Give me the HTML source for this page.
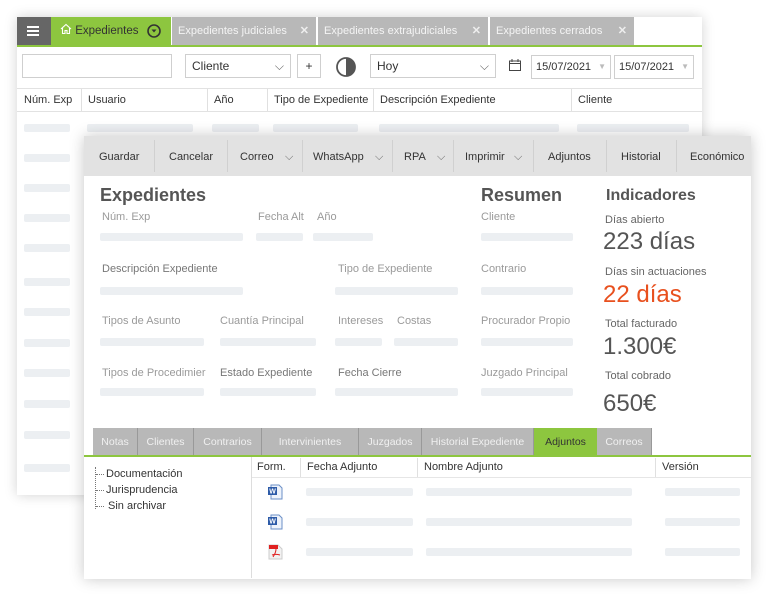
<!DOCTYPE html>
<html><head><meta charset="utf-8"><style>
*{box-sizing:border-box;margin:0;padding:0}
body{width:769px;height:598px;background:#fff;position:relative;overflow:hidden;font-family:"Liberation Sans",sans-serif;font-size:12px;color:#333}
.a{position:absolute}
.sk{position:absolute;height:8px;background:#eceff2;border-radius:2px}
.tab{position:absolute;top:17px;height:28px;background:#b8b8b8;color:#f4f4f4;line-height:28px;padding-left:6px;font-size:11px;white-space:nowrap}
.tab .x{position:absolute;right:7px;top:0;color:#eee;font-weight:bold;font-size:11px}
.inp{position:absolute;border:1px solid #cfcfcf;background:#fff;height:24px;line-height:22px;padding-left:6px;font-size:12px}
.hd{position:absolute;top:89px;height:22px;line-height:22px;font-size:11px;color:#333;border-right:1px solid #e0e0e0;padding-left:6px;white-space:nowrap;overflow:hidden}
.tb{position:absolute;top:136px;height:40px;line-height:42px;font-size:11px;color:#333}
.sep{position:absolute;top:140px;width:1px;height:32px;background:#d0d0d0}
.lbl{position:absolute;font-size:11px;color:#9a9a9a;white-space:nowrap}
.btab{position:absolute;top:428px;height:27px;background:#b8b8b8;color:#f0f0f0;line-height:28px;text-align:center;font-size:10.5px;border-right:1px solid #999;white-space:nowrap;overflow:hidden}
.gh{position:absolute;font-size:11px;color:#333}
</style></head><body>
<!-- back window -->
<div class="a" style="left:17px;top:17px;width:685px;height:478px;background:#fff;box-shadow:0 0 12px rgba(0,0,0,.18)"></div>
<div class="a" style="left:17px;top:17px;width:34px;height:28px;background:#666"></div>
<div class="a" style="left:27px;top:26px;width:12px;height:1.5px;background:#fff;box-shadow:0 4px 0 #fff,0 8px 0 #fff"></div>
<div class="a" style="left:51px;top:17px;width:120px;height:28px;background:#8dc63f;line-height:28px;padding-left:9px;color:#333;font-size:11.5px">
<svg width="12" height="12" viewBox="0 0 12 12" style="vertical-align:-1px"><path d="M1 6L6 1.5 11 6M2.5 5v5.5h2.5v-3h2v3h2.5V5" fill="none" stroke="#fff" stroke-width="1.1"/></svg> Expedientes</div>
<svg class="a" style="left:147px;top:24px" width="14" height="14" viewBox="0 0 14 14"><circle cx="7" cy="7" r="6" fill="none" stroke="#333" stroke-width="1.6"/><path d="M4.5 5.5h5L7 8.5z" fill="#333"/></svg>
<div class="tab" style="left:172px;width:144px">Expedientes judiciales<span class="x">✕</span></div>
<div class="tab" style="left:318px;width:170px">Expedientes extrajudiciales<span class="x">✕</span></div>
<div class="tab" style="left:490px;width:144px">Expedientes cerrados<span class="x">✕</span></div>
<div class="a" style="left:17px;top:45px;width:685px;height:2px;background:#8dc63f"></div>
<div class="inp" style="left:22px;top:54px;width:150px"></div>
<div class="inp" style="left:185px;top:54px;width:106px">Cliente<span style="position:absolute;right:6px;color:#666">⌵</span></div>
<div class="inp" style="left:297px;top:54px;width:24px;padding:0;text-align:center">+</div>
<svg class="a" style="left:335px;top:56px" width="22" height="22" viewBox="0 0 22 22"><circle cx="11" cy="11" r="9" fill="none" stroke="#555" stroke-width="1.8"/><path d="M11 2a9 9 0 0 1 0 18z" fill="#555"/></svg>
<div class="inp" style="left:370px;top:54px;width:126px">Hoy<span style="position:absolute;right:6px;color:#666">⌵</span></div>
<svg class="a" style="left:508px;top:58px" width="14" height="14" viewBox="0 0 14 14"><rect x="1.5" y="3" width="11" height="9.5" fill="none" stroke="#444"/><path d="M1.5 5.5h11M4 1v3M10 1v3" stroke="#444"/></svg>
<div class="inp" style="left:531px;top:55px;width:80px;font-size:11px;padding-left:4px">15/07/2021<span style="position:absolute;right:4px;color:#bbb;font-size:8px">▼</span></div>
<div class="inp" style="left:614px;top:55px;width:80px;font-size:11px;padding-left:4px">15/07/2021<span style="position:absolute;right:4px;color:#bbb;font-size:8px">▼</span></div>
<div class="a" style="left:17px;top:88px;width:685px;height:1px;background:#e2e2e2"></div>
<div class="a" style="left:17px;top:111px;width:685px;height:1px;background:#e2e2e2"></div>
<div class="hd" style="left:18px;width:64px">Núm. Exp</div>
<div class="hd" style="left:82px;width:126px">Usuario</div>
<div class="hd" style="left:208px;width:60px">Año</div>
<div class="hd" style="left:268px;width:106px">Tipo de Expediente</div>
<div class="hd" style="left:374px;width:198px">Descripción Expediente</div>
<div class="hd" style="left:572px;width:128px;border:none">Cliente</div>
<div class="sk" style="left:24px;top:124px;width:46px"></div><div class="sk" style="left:87px;top:124px;width:106px"></div><div class="sk" style="left:212px;top:124px;width:47px"></div><div class="sk" style="left:273px;top:124px;width:85px"></div><div class="sk" style="left:379px;top:124px;width:180px"></div><div class="sk" style="left:577px;top:124px;width:112px"></div>
<div class="sk" style="left:24px;top:154px;width:46px"></div><div class="sk" style="left:24px;top:184px;width:46px"></div><div class="sk" style="left:24px;top:214px;width:46px"></div><div class="sk" style="left:24px;top:244px;width:46px"></div><div class="sk" style="left:24px;top:278px;width:46px"></div><div class="sk" style="left:24px;top:308px;width:46px"></div><div class="sk" style="left:24px;top:339px;width:46px"></div><div class="sk" style="left:24px;top:369px;width:46px"></div><div class="sk" style="left:24px;top:400px;width:46px"></div><div class="sk" style="left:24px;top:431px;width:46px"></div><div class="sk" style="left:24px;top:464px;width:46px"></div>
<!-- front window -->
<div class="a" style="left:84px;top:136px;width:667px;height:443px;background:#fff;box-shadow:0 0 14px rgba(0,0,0,.22)"></div>
<div class="a" style="left:84px;top:136px;width:667px;height:40px;background:#e2e2e2"></div>
<div class="tb" style="left:99px">Guardar</div><div class="sep" style="left:154px"></div>
<div class="tb" style="left:169px">Cancelar</div><div class="sep" style="left:227px"></div>
<div class="tb" style="left:240px">Correo</div><div class="tb" style="left:285px;color:#666">⌵</div><div class="sep" style="left:302px"></div>
<div class="tb" style="left:313px">WhatsApp</div><div class="tb" style="left:375px;color:#666">⌵</div><div class="sep" style="left:392px"></div>
<div class="tb" style="left:404px">RPA</div><div class="tb" style="left:437px;color:#666">⌵</div><div class="sep" style="left:453px"></div>
<div class="tb" style="left:465px">Imprimir</div><div class="tb" style="left:514px;color:#666">⌵</div><div class="sep" style="left:533px"></div>
<div class="tb" style="left:548px">Adjuntos</div><div class="sep" style="left:606px"></div>
<div class="tb" style="left:621px">Historial</div><div class="sep" style="left:676px"></div>
<div class="tb" style="left:690px">Económico</div>
<div class="a" style="left:100px;top:185px;font-size:18px;font-weight:bold;color:#555">Expedientes</div>
<div class="a" style="left:481px;top:185px;font-size:18px;font-weight:bold;color:#555">Resumen</div>
<div class="a" style="left:606px;top:187px;font-size:16px;font-weight:bold;color:#555">Indicadores</div>
<div class="lbl" style="left:102px;top:211px">Núm. Exp</div><div class="lbl" style="left:258px;top:211px">Fecha Alt</div><div class="lbl" style="left:317px;top:211px">Año</div>
<div class="sk" style="left:100px;top:233px;width:143px"></div><div class="sk" style="left:256px;top:233px;width:47px"></div><div class="sk" style="left:313px;top:233px;width:60px"></div>
<div class="lbl" style="left:102px;top:263px;color:#777">Descripción Expediente</div><div class="lbl" style="left:338px;top:263px">Tipo de Expediente</div>
<div class="sk" style="left:100px;top:287px;width:143px"></div><div class="sk" style="left:335px;top:287px;width:123px"></div>
<div class="lbl" style="left:102px;top:315px">Tipos de Asunto</div><div class="lbl" style="left:220px;top:315px">Cuantía Principal</div><div class="lbl" style="left:338px;top:315px">Intereses</div><div class="lbl" style="left:397px;top:315px">Costas</div>
<div class="sk" style="left:100px;top:338px;width:104px"></div><div class="sk" style="left:220px;top:338px;width:96px"></div><div class="sk" style="left:335px;top:338px;width:47px"></div><div class="sk" style="left:394px;top:338px;width:64px"></div>
<div class="lbl" style="left:102px;top:367px">Tipos de Procedimier</div><div class="lbl" style="left:220px;top:367px;color:#777">Estado Expediente</div><div class="lbl" style="left:338px;top:367px;color:#777">Fecha Cierre</div>
<div class="sk" style="left:100px;top:388px;width:104px"></div><div class="sk" style="left:220px;top:388px;width:96px"></div><div class="sk" style="left:335px;top:388px;width:123px"></div>
<div class="lbl" style="left:481px;top:211px">Cliente</div><div class="sk" style="left:481px;top:233px;width:92px"></div>
<div class="lbl" style="left:481px;top:263px">Contrario</div><div class="sk" style="left:481px;top:287px;width:92px"></div>
<div class="lbl" style="left:481px;top:315px">Procurador Propio</div><div class="sk" style="left:481px;top:338px;width:92px"></div>
<div class="lbl" style="left:481px;top:367px">Juzgado Principal</div><div class="sk" style="left:481px;top:388px;width:92px"></div>
<div class="lbl" style="left:605px;top:214px;color:#666">Días abierto</div>
<div class="a" style="left:603px;top:228px;font-size:24px;color:#555">223 días</div>
<div class="lbl" style="left:605px;top:266px;color:#666">Días sin actuaciones</div>
<div class="a" style="left:603px;top:281px;font-size:24px;color:#e8501e">22 días</div>
<div class="lbl" style="left:605px;top:318px;color:#666">Total facturado</div>
<div class="a" style="left:603px;top:333px;font-size:24px;color:#555">1.300€</div>
<div class="lbl" style="left:605px;top:370px;color:#666">Total cobrado</div>
<div class="a" style="left:603px;top:390px;font-size:24px;color:#555">650€</div>
<div class="btab" style="left:93px;width:45px">Notas</div>
<div class="btab" style="left:138px;width:56px">Clientes</div>
<div class="btab" style="left:194px;width:68px">Contrarios</div>
<div class="btab" style="left:262px;width:97px">Intervinientes</div>
<div class="btab" style="left:359px;width:63px">Juzgados</div>
<div class="btab" style="left:422px;width:112px">Historial Expediente</div>
<div class="btab" style="left:534px;width:63px;background:#8dc63f;color:#333;border:none">Adjuntos</div>
<div class="btab" style="left:597px;width:55px">Correos</div>
<div class="a" style="left:84px;top:455px;width:667px;height:2px;background:#8dc63f"></div>
<div class="a" style="left:95px;top:467px;width:1px;height:42px;border-left:1px dotted #777"></div>
<div class="a" style="left:96px;top:474px;width:8px;border-top:1px dotted #777"></div>
<div class="a" style="left:96px;top:490px;width:8px;border-top:1px dotted #777"></div>
<div class="a" style="left:96px;top:506px;width:8px;border-top:1px dotted #777"></div>
<div class="gh" style="left:106px;top:468px">Documentación</div>
<div class="gh" style="left:106px;top:484px">Jurisprudencia</div>
<div class="gh" style="left:108px;top:500px">Sin archivar</div>
<div class="a" style="left:251px;top:457px;width:1px;height:121px;background:#ddd"></div>
<div class="a" style="left:252px;top:477px;width:499px;height:1px;background:#e6e6e6"></div>
<div class="gh" style="left:257px;top:461px">Form.</div>
<div class="a" style="left:300px;top:458px;width:1px;height:19px;background:#e0e0e0"></div>
<div class="gh" style="left:307px;top:461px">Fecha Adjunto</div>
<div class="a" style="left:417px;top:458px;width:1px;height:19px;background:#e0e0e0"></div>
<div class="gh" style="left:424px;top:461px">Nombre Adjunto</div>
<div class="a" style="left:655px;top:458px;width:1px;height:19px;background:#e0e0e0"></div>
<div class="gh" style="left:662px;top:461px">Versión</div>
<svg class="a" style="left:267px;top:483px" width="17" height="17" viewBox="0 0 17 17"><path d="M4 2h8l3 3v11H4z" fill="#eef3fb" stroke="#6b8fc7"/><rect x="1" y="4" width="9" height="8" fill="#2d5ba8"/><text x="2.2" y="10.5" font-size="7" font-weight="bold" fill="#fff" font-family="Liberation Sans">W</text></svg>
<svg class="a" style="left:267px;top:513px" width="17" height="17" viewBox="0 0 17 17"><path d="M4 2h8l3 3v11H4z" fill="#eef3fb" stroke="#6b8fc7"/><rect x="1" y="4" width="9" height="8" fill="#2d5ba8"/><text x="2.2" y="10.5" font-size="7" font-weight="bold" fill="#fff" font-family="Liberation Sans">W</text></svg>
<svg class="a" style="left:267px;top:543px" width="17" height="17" viewBox="0 0 17 17"><path d="M2 2h9l4 4v10H2z" fill="#f2f2f2" stroke="#ccc"/><rect x="2" y="2" width="9" height="4" fill="#e02020"/><path d="M6 14c2-3 3-5 3-8M5 12c3-1 5-1 8 0" stroke="#e02020" fill="none"/></svg>
<div class="sk" style="left:306px;top:488px;width:107px"></div><div class="sk" style="left:426px;top:488px;width:206px"></div><div class="sk" style="left:665px;top:488px;width:75px"></div>
<div class="sk" style="left:306px;top:518px;width:107px"></div><div class="sk" style="left:426px;top:518px;width:206px"></div><div class="sk" style="left:665px;top:518px;width:75px"></div>
<div class="sk" style="left:306px;top:548px;width:107px"></div><div class="sk" style="left:426px;top:548px;width:206px"></div><div class="sk" style="left:665px;top:548px;width:75px"></div>
</body></html>
